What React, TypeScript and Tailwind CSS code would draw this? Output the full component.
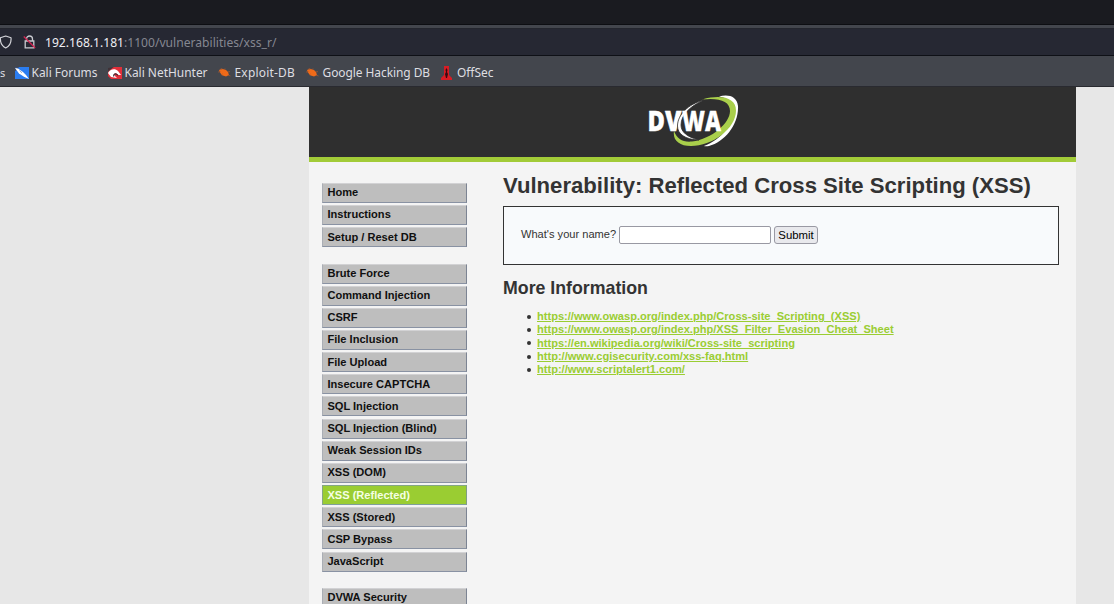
import React from 'react';

const menuGroups = [
  ['Home', 'Instructions', 'Setup / Reset DB'],
  [
    'Brute Force', 'Command Injection', 'CSRF', 'File Inclusion', 'File Upload', 'Insecure CAPTCHA',
    'SQL Injection', 'SQL Injection (Blind)', 'Weak Session IDs', 'XSS (DOM)', 'XSS (Reflected)',
    'XSS (Stored)', 'CSP Bypass', 'JavaScript',
  ],
  ['DVWA Security'],
];

const links = [
  'https://www.owasp.org/index.php/Cross-site_Scripting_(XSS)',
  'https://www.owasp.org/index.php/XSS_Filter_Evasion_Cheat_Sheet',
  'https://en.wikipedia.org/wiki/Cross-site_scripting',
  'http://www.cgisecurity.com/xss-faq.html',
  'http://www.scriptalert1.com/',
];

function ForumsIcon() {
  return (
    <svg width="14" height="12" viewBox="0 0 14 12" className="shrink-0">
      <path d="M3 0H14V12H0V4Z" fill="#2b7df0" />
      <path d="M0 0H4L2 3L0 4Z" fill="#3a4c70" />
      <path d="M0 1L3 1.5L8 5L11 8L14 12L9 9.8L4 6.5Z" fill="#fff" />
      <path d="M4.5 3.5L7 5.8" stroke="#8594ad" strokeWidth=".8" />
    </svg>
  );
}

function NetHunterIcon() {
  return (
    <svg width="14" height="12" viewBox="0 0 14 12" className="shrink-0">
      <path d="M5 0H14V12H3L0 9V5Z" fill="#e22f3a" />
      <path d="M0 6C2 2 7 1 10 4L13 8L10.5 8C8 5.2 5.5 6 6 8L9 11L3 10Z" fill="#fff" />
      <path d="M5.8 9.5C5 6.5 8 6 10 8.5" stroke="#3b2c34" strokeWidth="1.1" fill="none" />
      <path d="M0 1L6 0L0 4Z" fill="#403238" />
    </svg>
  );
}

function BugIcon() {
  return (
    <svg width="13" height="12" viewBox="0 0 13 12" className="shrink-0">
      <path d="M1 3L4 1.8L8 3L10 5L11 8L8 9.6L4 8.3L2 5.5Z" fill="#ee6a19" />
      <path d="M3 1L4 3M7 1.5L6.5 3M0 5L2.5 4.8M10 5L12 4.6M3 8L4.5 7M10 8L12.5 9" stroke="#a3572f" strokeWidth=".8" />
    </svg>
  );
}

function OffSecIcon() {
  return (
    <svg width="11" height="14" viewBox="0 0 11 14" className="shrink-0">
      <path d="M3 0H8V9L11 12V14H0V12L3 9Z" fill="#d71c24" />
      <path d="M5.5 2L6.5 4L6 6L7 8L6 12H5L4 8L5 6L4.5 4Z" fill="#360b12" />
    </svg>
  );
}

function Logo() {
  return (
    <svg width="92" height="54" viewBox="0 0 92 54">
      <path d="M71 1.5C80-1 89 1 90 11C91 29 77 47 61 51C58 51.6 56 51 56 51C74 44 86 29 85 14C84 7 80 3 71 1.5Z" fill="#fff" />
      <path d="M54 4.5C74-1 88 3 88 15.5C88 34 64 51 43 51C31 51 24.5 45 26 36C29 44 35 47.5 44 46.5C64 44 82 28 82 16C82 6 71 2.500 54 4.5Z" fill="#a9cf4b" />
      <g className="fill-white stroke-white font-['Open_Sans',sans-serif] text-[27.5px] font-extrabold" strokeWidth=".3">
        <text x="-.6" y="35.5" textLength="34" lengthAdjust="spacingAndGlyphs">DV</text>
        <path d="M56 5C40 9 29.5 20 29.5 31C29.5 39 37 44.5 51 45C39 42 33 37 33 30C33 20 42 11 56 5Z" fill="#fff" stroke="#2f2f2f" strokeWidth=".8" />
        <text x="34" y="35.5" textLength="39" lengthAdjust="spacingAndGlyphs">WA</text>
      </g>
    </svg>
  );
}

function Bookmark({ label, icon, className }: { label: string; icon: React.ReactNode; className: string }) {
  return (
    <div className={`flex shrink-0 items-center ${className}`}>
      {icon}
      <span>{label}</span>
    </div>
  );
}

function BrowserBar() {
  return (
    <header className="h-[87px] bg-[#43464d] font-['Noto_Sans',sans-serif]">
      <div className="h-[25px] border-b border-[#0d0e12] bg-[#1a1b20]" />
      <div className="h-[4px] border-b border-[#24262e] bg-[#43464d]" />
      <div className="flex h-[27px] items-center border-b border-[#0e1016] bg-[#262833]">
        <svg width="12" height="14" viewBox="0 0 12 14" className="shrink-0">
          <path d="M5.7 1L11 2.8C11.5 8 9.5 11 5.7 13C2 11 0 8 .4 2.8Z" fill="none" stroke="#d4d5da" strokeWidth="1.2" strokeLinejoin="round" />
        </svg>
        <svg width="13" height="14" viewBox="0 0 13 14" className="ml-[11px] shrink-0">
          <path d="M3.5 6V4C3.5 0 9.5 0 9.5 4V6M2.2 6H10.8V12.8H2.2Z" fill="none" stroke="#c9cad0" strokeWidth="1.3" />
          <path d="M.8 1.5L12.2 13" stroke="#d42552" strokeWidth="1.3" />
        </svg>
        <span className="ml-[9px] pt-[2px] text-[12.12px] leading-[16px] whitespace-nowrap text-[#858791]"><span className="text-[#eeeef2]">192.168.1.181</span>:1100/vulnerabilities/xss_r/</span>
      </div>
      <nav className="flex h-[31px] items-center border-b border-[#292a30] pt-[3px] text-[11.95px] leading-[16px] whitespace-nowrap text-[#dedee2]">
        <span className="w-[14.5px] shrink-0 text-[11px]">s</span>
        <Bookmark className="w-[93px] gap-[3px]" icon={<ForumsIcon />} label="Kali Forums" />
        <Bookmark className="w-[110px] gap-[3px]" icon={<NetHunterIcon />} label="Kali NetHunter" />
        <Bookmark className="w-[88px] gap-[4px] tracking-[.22px]" icon={<BugIcon />} label="Exploit-DB" />
        <Bookmark className="w-[135.5px] gap-[4px] tracking-[-.05px]" icon={<BugIcon />} label="Google Hacking DB" />
        <Bookmark className="gap-[5px]" icon={<OffSecIcon />} label="OffSec" />
      </nav>
    </header>
  );
}

function Menu() {
  return (
    <nav className="ml-[13px] w-[145px] pt-[20.8px]">
      {menuGroups.map((group) => (
        <ul key={group[0]} className="mb-[16.4px]">
          {group.map((item) => (
            <li key={item} className={`mb-[2.16px] flex h-5 items-center border pl-[4.4px] text-[11.08px] leading-[13px] font-bold ${item === 'XSS (Reflected)' ? 'border-t-[#84a684] border-r-[#7f9f83] border-b-[#7f9f9a] border-l-[#84a684] bg-[#9acd32] text-[#f5ffe3]' : 'border-t-[#d2d2d4] border-r-[#7c8493] border-b-[#8992a3] border-l-[#aaaeb5] bg-[#bebebe] text-[#101010]'}`}>{item}</li>
          ))}
        </ul>
      ))}
    </nav>
  );
}

export default function App() {
  return (
    <div className="flex h-[604px] w-[1114px] flex-col overflow-hidden bg-[#e7e7e7] font-['Liberation_Sans',sans-serif]">
      <BrowserBar />
      <div className="ml-[309px] min-h-0 w-[767px] flex-1 bg-[#f4f4f4]">
        <div className="flex h-[75px] justify-center border-b-[5px] border-[#a2cb38] bg-[#2f2f2f] pt-[8px] pl-[3px]"><Logo /></div>
        <div className="flex items-start">
          <Menu />
          <main className="ml-[36px] w-[556px] pt-[10px] text-[#333]">
            <h1 className="text-[22.13px] leading-[28px] font-bold whitespace-nowrap">Vulnerability: Reflected Cross Site Scripting (XSS)</h1>
            <form className="mt-[6px] flex h-[59px] items-center border border-[#333] bg-[#f8fafc] pl-[17px] text-[11.08px]" onSubmit={(event) => event.preventDefault()}>
              <label htmlFor="name" className="mb-[2px] w-[98px] whitespace-nowrap">What's your name?</label>
              <input id="name" className="mb-px h-[18px] w-[152px] rounded-[2px] border border-[#9999a3] bg-white" />
              <button className="mb-px ml-[3px] h-[18px] w-[44px] rounded-[3px] border border-[#9999a3] bg-[#e9e9ed] text-[11.36px] leading-[14px] text-black">Submit</button>
            </form>
            <h2 className="mt-[12px] text-[17.75px] leading-[22px] font-bold">More Information</h2>
            <ul className="mt-[11px] text-[11.08px] leading-[13.3px]">
              {links.map((link) => (
                <li key={link} className="flex items-center pl-[24px]">
                  <span className="mr-[6px] size-[4px] rounded-full bg-[#333]" />
                  <a href="#" className="font-bold whitespace-nowrap text-[#9acd32] underline">{link}</a>
                </li>
              ))}
            </ul>
          </main>
        </div>
      </div>
    </div>
  );
}
